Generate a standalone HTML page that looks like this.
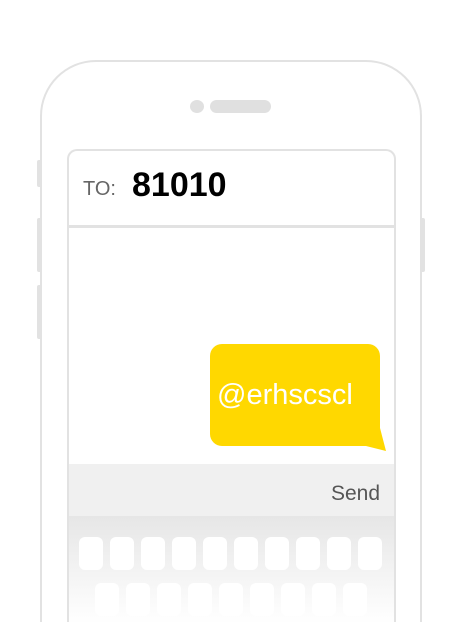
<!DOCTYPE html>
<html><head><style>
html,body{margin:0;width:460px;height:622px;overflow:hidden;background:#fff}
#w{position:relative;width:460px;height:622px;overflow:hidden;font-family:"Liberation Sans",sans-serif}
.a{position:absolute;box-sizing:border-box}
.k{position:absolute;width:24px;height:33px;background:#fff;border-radius:6px}
</style></head><body><div id="w">
<div class="a" style="left:40px;top:60px;width:382px;height:562px;border:2px solid #e2e2e2;border-bottom:none;border-radius:56px 56px 0 0"></div>
<div class="a" style="left:37px;top:160px;width:4px;height:27px;background:#e2e2e2;border-radius:2px 0 0 2px"></div>
<div class="a" style="left:37px;top:218px;width:4px;height:54px;background:#e2e2e2;border-radius:2px 0 0 2px"></div>
<div class="a" style="left:37px;top:285px;width:4px;height:54px;background:#e2e2e2;border-radius:2px 0 0 2px"></div>
<div class="a" style="left:421px;top:218px;width:4px;height:54px;background:#e2e2e2;border-radius:0 2px 2px 0"></div>
<div class="a" style="left:190px;top:100px;width:14px;height:13px;background:#e0e0e0;border-radius:50%"></div>
<div class="a" style="left:210px;top:100px;width:61px;height:13px;background:#e0e0e0;border-radius:7px"></div>
<div class="a" style="left:67px;top:149px;width:329px;height:473px;border:2px solid #e2e2e2;border-bottom:none;border-radius:10px 10px 0 0;overflow:hidden">
  <div class="a" style="left:0;top:74px;width:100%;height:3px;background:#e2e2e2"></div>
  <div class="a" style="left:14px;top:27px;font-size:20px;color:#666">TO:</div>
  <div class="a" style="left:63px;top:15px;font-size:34px;font-weight:bold;color:#000">81010</div>
  <div class="a" style="left:0;top:313px;width:100%;height:52px;background:#f0f0f0"></div>
  <div class="a" style="right:14px;top:331px;font-size:21px;color:#555">Send</div>
  <div class="a" style="left:0;top:365px;width:100%;height:108px;background:linear-gradient(#e6e6e6,#f8f8f8 70%,#fff)"></div>
</div>
<div id="keys"></div>
<svg class="a" style="left:0;top:0" width="460" height="622">
<path d="M222 344H368A12 12 0 0 1 380 356V428L386 451L366 446H222A12 12 0 0 1 210 434V356A12 12 0 0 1 222 344Z" fill="#ffd800"/>
</svg>
<div class="a" style="left:217px;top:379px;font-size:29px;color:#fff">@erhscscl</div>
<script>
var h='';
for(var i=0;i<10;i++)h+='<div class="k" style="left:'+(79+i*31)+'px;top:537px"></div>';
for(var i=0;i<9;i++)h+='<div class="k" style="left:'+(95+i*31)+'px;top:583px"></div>';
document.getElementById('keys').innerHTML=h;
</script>
</div></body></html>
